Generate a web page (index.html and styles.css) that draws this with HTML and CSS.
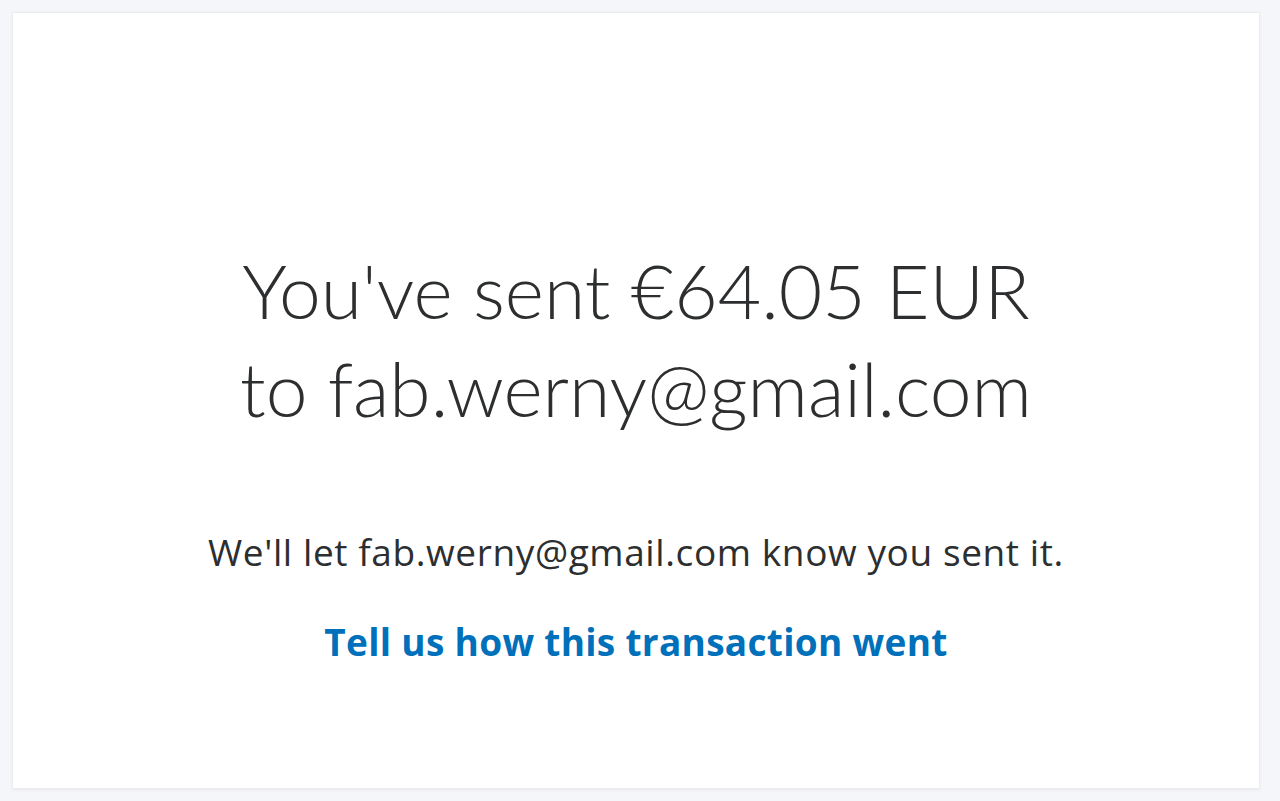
FILE: index.html
```html
<!DOCTYPE html>
<html lang="en">
<head>
    <meta charset="UTF-8">
    <meta name="viewport" content="width=device-width, initial-scale=1.0">
    <title>Payment sent</title>
    <link rel="stylesheet" href="styles.css">
</head>
<body>
    <div class="confirm-card">
        <h1 class="confirm-title">You've sent €64.05 EUR<br>to fab.werny@gmail.com</h1>
        <p class="confirm-note">We'll let fab.werny@gmail.com know you sent it.</p>
        <a class="confirm-link" href="#">Tell us how this transaction went</a>
    </div>
</body>
</html>
```

FILE: styles.css
```css
html, body {
  margin: 0;
  height: 100%;
}

body {
  background-color: #f5f6fa;
  font-family: Lato, "Noto Sans", sans-serif;
  color: #2c2e2f;
  padding: 12px 20px 12px 12px;
  box-sizing: border-box;
}

.confirm-card {
  height: 100%;
  background-color: #fff;
  border: 1px solid #ececec;
  box-shadow: 0 1px 3px rgba(0, 0, 0, 0.06);
  box-sizing: border-box;
  display: flex;
  flex-direction: column;
  align-items: center;
  text-align: center;
  padding-top: 228px;
}

.confirm-title {
  font-size: 75px;
  font-weight: 300;
  line-height: 98px;
  margin: 0;
}

.confirm-note {
  font-family: "Open Sans", Lato, sans-serif;
  font-size: 37px;
  line-height: 44px;
  letter-spacing: 0.6px;
  margin: 93px 0 0;
}

.confirm-link {
  font-family: "Open Sans", Lato, sans-serif;
  font-size: 37px;
  line-height: 44px;
  letter-spacing: 0.3px;
  font-weight: 700;
  color: #0070ba;
  text-decoration: none;
  margin-top: 46px;
}
```
